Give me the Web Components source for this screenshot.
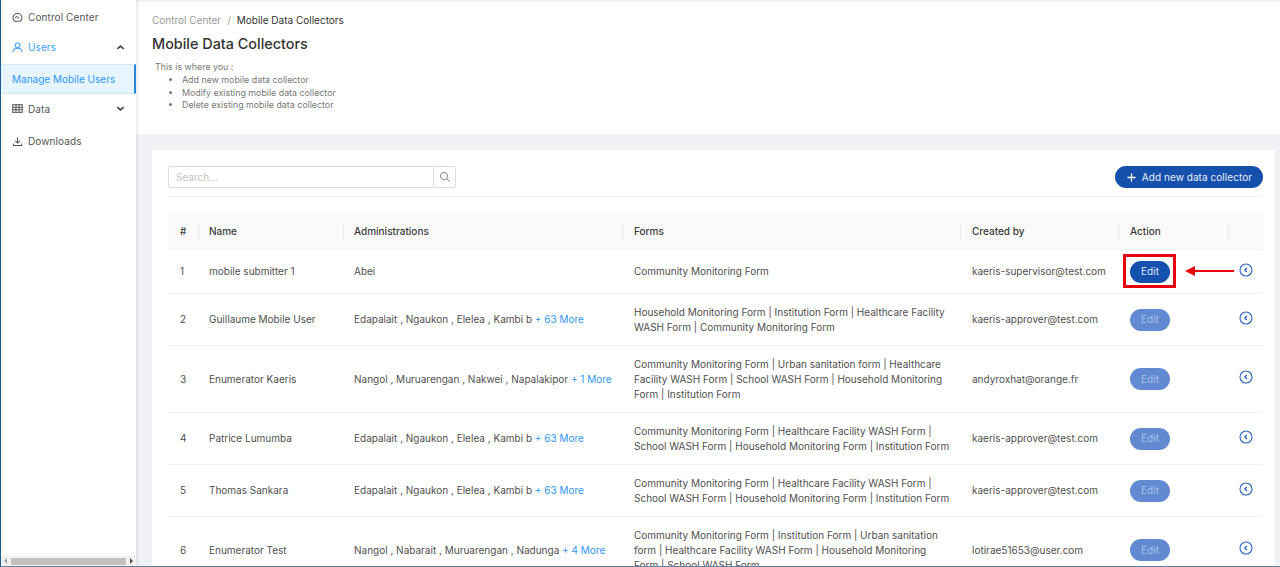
<!DOCTYPE html>
<html>
<head>
<meta charset="utf-8">
<title>Mobile Data Collectors</title>
<style>
  html, body { margin: 0; height: 100%; overflow: hidden; }
  body { font-family: 'Inter', 'Liberation Sans', sans-serif; color: #4a4a4a; }
</style>
</head>
<body>
<app-shell>
  <side-nav slot="nav">
    <nav-item icon="gauge" label="Control Center"></nav-item>
    <nav-item icon="user" label="Users" chevron="up" state="open"></nav-item>
    <nav-item label="Manage Mobile Users" state="selected"></nav-item>
    <nav-item icon="table" label="Data" chevron="down" state="tight"></nav-item>
    <nav-item icon="download" label="Downloads" state="last"></nav-item>
  </side-nav>
  <page-header></page-header>
  <collector-card></collector-card>
</app-shell>

<script>
  const FONT = "'Inter', 'Liberation Sans', sans-serif";
  const ICONS = {
    gauge: '<path d="M3 10.2A4.9 4.9 0 1 1 9 10.2Z"/><path d="M3.8 6.3A2.3 2.3 0 0 1 6 4.6M6 7.2l1.5-1.8"/>',
    user: '<circle cx="6" cy="3.6" r="2.6"/><path d="M1 11.3c0-3 2.2-4.6 5-4.6s5 1.6 5 4.6"/>',
    table: '<rect x=".8" y="1.8" width="10.4" height="8.4"/><path d="M.8 4.6h10.4M.8 7.4h10.4M4.3 1.8v8.4M7.7 1.8v8.4"/>',
    download: '<path d="M6 1.5v6M3.6 5.4 6 7.8l2.4-2.4M1.5 8.5v1.8h9V8.5"/>'
  };

  class AppShell extends HTMLElement {
    constructor() {
      super();
      this.attachShadow({mode: 'open'}).innerHTML = `
      <style>
        :host {
          display: grid;
          grid-template-columns: 135px 1fr;
          height: 567px;
          box-sizing: border-box;
          border-left: 1px solid #1f5a8c;
          border-bottom: 1px solid #5b84a6;
          background: #f0f1f5;
          overflow: hidden;
          font-family: ${FONT};
        }
        main { min-width: 0; overflow: hidden; padding-top: 2px; }
      </style>
      <slot name="nav"></slot>
      <main><slot></slot></main>`;
    }
  }

  class SideNav extends HTMLElement {
    constructor() {
      super();
      this.attachShadow({mode: 'open'}).innerHTML = `
      <style>
        :host {
          display: flex;
          flex-direction: column;
          background: #fff;
          box-shadow: 1px 0 3px rgba(0, 0, 0, .12);
          padding-top: 2px;
          position: relative;
          z-index: 1;
        }
        .items { flex: 1; display: flex; flex-direction: column; }
        .scroll {
          height: 10px;
          background: #f1f1f1;
          display: flex;
          align-items: center;
          padding: 0 3px;
          gap: 4px;
        }
        .thumb { flex: 1; height: 7px; background: #c1c1c1; }
        .arrow { width: 0; height: 0; border: 3px solid transparent; }
        .left { border-right-color: #a0a0a0; border-left-width: 0; }
        .right { border-left-color: #505050; border-right-width: 0; }
      </style>
      <div class="items"><slot></slot></div>
      <div class="scroll"><span class="arrow left"></span><span class="thumb"></span><span class="arrow right"></span></div>`;
    }
  }

  class NavItem extends HTMLElement {
    constructor() {
      super();
      this.attachShadow({mode: 'open'});
    }

    connectedCallback() {
      const icon = this.getAttribute('icon');
      const chevron = this.getAttribute('chevron');
      const chevronPath = chevron === 'up' ? 'M2.5 7.5 6 4.5l3.5 3' : 'M2.5 4.5 6 7.5l3.5-3';
      this.shadowRoot.innerHTML = `
      <style>
        :host {
          display: flex;
          align-items: center;
          gap: 5px;
          padding: 0 10px 0 11px;
          height: 30px;
          font-size: 10px;
          letter-spacing: .1px;
          color: #555;
          box-sizing: border-box;
        }
        :host([state="open"]) { color: #40a0ff; }
        :host([state="selected"]) {
          color: #2f97fb;
          background: #e6f5ff;
          margin-top: 2px;
          border: 1px solid #cfe9fb;
          border-left: 0;
          border-right: 2px solid #2a86d8;
          letter-spacing: 0;
        }
        :host([state="tight"]) { height: 29px; }
        :host([state="last"]) { margin-top: 3px; }
        .label { flex: 1; white-space: nowrap; }
        svg { flex: none; width: 11px; height: 11px; fill: none; stroke: currentColor; stroke-width: 1.1; }
        .chev { stroke-width: 1.8; stroke: #444; }
      </style>
      ${icon ? `<svg viewBox="0 0 12 12">${ICONS[icon]}</svg>` : ''}
      <span class="label">${this.getAttribute('label')}</span>
      ${chevron ? `<svg class="chev" viewBox="0 0 12 12"><path d="${chevronPath}"/></svg>` : ''}`;
    }
  }

  class PageHeader extends HTMLElement {
    constructor() {
      super();
      this.attachShadow({mode: 'open'}).innerHTML = `
      <style>
        :host {
          display: block;
          height: 132px;
          box-sizing: border-box;
          background: #fff;
          padding: 10.5px 16px 0;
        }
        .crumbs { font-size: 10px; line-height: 14px; color: #999; }
        .crumbs i { font-style: normal; margin: 0 6px; }
        .crumbs b { font-weight: 400; color: #333; }
        h1 { margin: 7.5px 0 7px; font-size: 14.4px; line-height: 20px; font-weight: 500; color: #333; }
        .about { font-size: 8.85px; line-height: 12.8px; color: #777; padding-left: 3px; }
        ul { margin: 0; padding-left: 27px; }
      </style>
      <div class="crumbs">Control Center<i>/</i><b>Mobile Data Collectors</b></div>
      <h1>Mobile Data Collectors</h1>
      <div class="about">
        This is where you :
        <ul>
          <li>Add new mobile data collector</li>
          <li>Modify existing mobile data collector</li>
          <li>Delete existing mobile data collector</li>
        </ul>
      </div>`;
    }
  }

  class SearchBox extends HTMLElement {
    constructor() {
      super();
      this.attachShadow({mode: 'open'}).innerHTML = `
      <style>
        :host { display: flex; width: 288px; height: 22px; box-sizing: border-box; font-size: 10px; }
        .field {
          flex: 1;
          border: 1px solid #dcdcdc;
          border-radius: 2px 0 0 2px;
          padding: 0 7px;
          line-height: 20px;
          color: #c4c4c4;
        }
        .btn {
          width: 22px;
          box-sizing: border-box;
          border: 1px solid #dcdcdc;
          border-left: 0;
          border-radius: 0 2px 2px 0;
          display: flex;
          align-items: center;
          justify-content: center;
        }
        svg { width: 12px; height: 12px; fill: none; stroke: #888; stroke-width: 1; }
      </style>
      <div class="field">Search...</div>
      <div class="btn"><svg viewBox="0 0 12 12"><circle cx="5" cy="5" r="3.6"/><path d="m7.7 7.7 3 3"/></svg></div>`;
    }
  }

  class AddButton extends HTMLElement {
    constructor() {
      super();
      this.attachShadow({mode: 'open'}).innerHTML = `
      <style>
        :host {
          display: inline-flex;
          align-items: center;
          gap: 6px;
          height: 22px;
          padding: 0 11px 0 12px;
          border-radius: 11px;
          background: #1650ad;
          color: #e8eefa;
          font-size: 10px;
          letter-spacing: .05px;
          white-space: nowrap;
        }
        svg { width: 9px; height: 9px; stroke: #fff; stroke-width: 1.4; fill: none; }
      </style>
      <svg viewBox="0 0 10 10"><path d="M5 .5v9M.5 5h9"/></svg>
      <slot></slot>`;
    }
  }

  class TableRow extends HTMLElement {
    constructor() {
      super();
      this.attachShadow({mode: 'open'}).innerHTML = `
      <style>
        :host {
          display: grid;
          grid-template-columns: 30px 145px 279px 338px 158px 110px 35px;
          align-items: center;
          border-bottom: 1px solid #f0f0f0;
          font-size: 10px;
          line-height: 15px;
          color: #4f4f4f;
        }
        ::slotted(*) { padding: 10.5px 8px 10.5px 12px; min-width: 0; }
        ::slotted(:nth-child(2)), ::slotted(:nth-child(3)) { padding-left: 11px; }
        :host(.head) ::slotted(*) { padding-top: 10px; padding-bottom: 10px; }
      </style>
      <slot></slot>`;
    }
  }

  class HeadCell extends HTMLElement {
    constructor() {
      super();
      this.attachShadow({mode: 'open'}).innerHTML = `
      <style>
        :host { display: block; position: relative; align-self: stretch; font-weight: 500; color: #3a3a3a; }
        :host([sep])::before {
          content: '';
          position: absolute;
          left: 0;
          top: 8px;
          bottom: 8px;
          width: 1px;
          background: #ececec;
        }
      </style>
      <slot></slot>`;
    }
  }

  class EditButton extends HTMLElement {
    constructor() {
      super();
      this.attachShadow({mode: 'open'}).innerHTML = `
      <style>
        :host {
          display: flex;
          align-items: center;
          justify-content: center;
          width: 40px;
          height: 22px;
          border-radius: 11px;
          background: #618ad2;
          color: #a9c0e8;
          font-size: 10px;
        }
        :host([active]) { background: #1650ad; color: #dfe8f8; }
      </style>
      <slot></slot>`;
    }
  }

  class ExpandToggle extends HTMLElement {
    constructor() {
      super();
      this.attachShadow({mode: 'open'}).innerHTML = `
      <style>
        :host { display: block; width: 14px; height: 14px; margin: -4px 0 0 -1px; }
        svg { display: block; width: 14px; height: 14px; fill: none; stroke: #2f66c4; stroke-width: 1.1; }
        .c { stroke-width: 1.4; }
      </style>
      <svg viewBox="0 0 14 14"><circle cx="7" cy="7" r="6"/><path class="c" d="M7.9 5 5.9 7l2 2"/></svg>`;
    }
  }

  class ArrowNote extends HTMLElement {
    constructor() {
      super();
      this.attachShadow({mode: 'open'}).innerHTML = `
      <style>
        :host { position: absolute; left: 955px; top: 40px; width: 112px; height: 34px; display: block; pointer-events: none; }
        .box { position: absolute; left: 0; top: 0; width: 53px; height: 34px; box-sizing: border-box; border: 3px solid #e8000d; }
        svg { position: absolute; left: 62px; top: 11px; width: 50px; height: 12px; }
      </style>
      <div class="box"></div>
      <svg viewBox="0 0 50 12"><path d="M0 6 10 1v4h39v2H10v4z" fill="#e8000d"/></svg>`;
    }
  }

  const MORE = n => `<span style="color:#2f97fb"> + ${n} More</span>`;
  const ROWS = [
    ['1', 'mobile submitter 1', 'Abei', 'Community Monitoring Form', 'kaeris-supervisor@test.com'],
    ['2', 'Guillaume Mobile User', 'Edapalait , Ngaukon , Elelea , Kambi b' + MORE(63), 'Household Monitoring Form | Institution Form | Healthcare Facility WASH Form | Community Monitoring Form', 'kaeris-approver@test.com'],
    ['3', 'Enumerator Kaeris', 'Nangol , Muruarengan , Nakwei , Napalakipor' + MORE(1), 'Community Monitoring Form | Urban sanitation form | Healthcare Facility WASH Form | School WASH Form | Household Monitoring Form | Institution Form', 'andyroxhat@orange.fr'],
    ['4', 'Patrice Lumumba', 'Edapalait , Ngaukon , Elelea , Kambi b' + MORE(63), 'Community Monitoring Form | Healthcare Facility WASH Form | School WASH Form | Household Monitoring Form | Institution Form', 'kaeris-approver@test.com'],
    ['5', 'Thomas Sankara', 'Edapalait , Ngaukon , Elelea , Kambi b' + MORE(63), 'Community Monitoring Form | Healthcare Facility WASH Form | School WASH Form | Household Monitoring Form | Institution Form', 'kaeris-approver@test.com'],
    ['6', 'Enumerator Test', 'Nangol , Nabarait , Muruarengan , Nadunga' + MORE(4), 'Community Monitoring Form | Institution Form | Urban sanitation form | Healthcare Facility WASH Form | Household Monitoring Form | School WASH Form', 'lotirae51653@user.com']
  ];

  class CollectorCard extends HTMLElement {
    constructor() {
      super();
      const rows = ROWS.map((r, i) => `
        <table-row>
          <div>${r[0]}</div><div>${r[1]}</div><div style="white-space:nowrap">${r[2]}</div><div>${r[3]}</div><div>${r[4]}</div>
          <div><edit-button ${i === 0 ? 'active' : ''}>Edit</edit-button></div>
          <div><expand-toggle></expand-toggle></div>
        </table-row>`).join('');
      this.attachShadow({mode: 'open'}).innerHTML = `
      <style>
        :host {
          display: block;
          margin: 16px 5px 0 16px;
          padding: 16px 12px 0 16px;
          background: #fff;
          height: 420px;
          overflow: hidden;
        }
        .tools {
          display: flex;
          justify-content: space-between;
          align-items: center;
          padding-bottom: 8px;
          border-bottom: 1px solid #f0f0f0;
          margin-bottom: 17px;
        }
        .table { position: relative; }
        .head { background: #fafafa; }
      </style>
      <div class="tools">
        <search-box></search-box>
        <add-button>Add new data collector</add-button>
      </div>
      <div class="table">
        <table-row class="head">
          <head-cell>#</head-cell>
          <head-cell sep>Name</head-cell>
          <head-cell sep>Administrations</head-cell>
          <head-cell sep>Forms</head-cell>
          <head-cell sep>Created by</head-cell>
          <head-cell sep>Action</head-cell>
          <head-cell sep></head-cell>
        </table-row>
        ${rows}
        <arrow-note></arrow-note>
      </div>`;
    }
  }

  customElements.define('app-shell', AppShell);
  customElements.define('side-nav', SideNav);
  customElements.define('nav-item', NavItem);
  customElements.define('page-header', PageHeader);
  customElements.define('search-box', SearchBox);
  customElements.define('add-button', AddButton);
  customElements.define('table-row', TableRow);
  customElements.define('head-cell', HeadCell);
  customElements.define('edit-button', EditButton);
  customElements.define('expand-toggle', ExpandToggle);
  customElements.define('arrow-note', ArrowNote);
  customElements.define('collector-card', CollectorCard);
</script>
</body>
</html>
